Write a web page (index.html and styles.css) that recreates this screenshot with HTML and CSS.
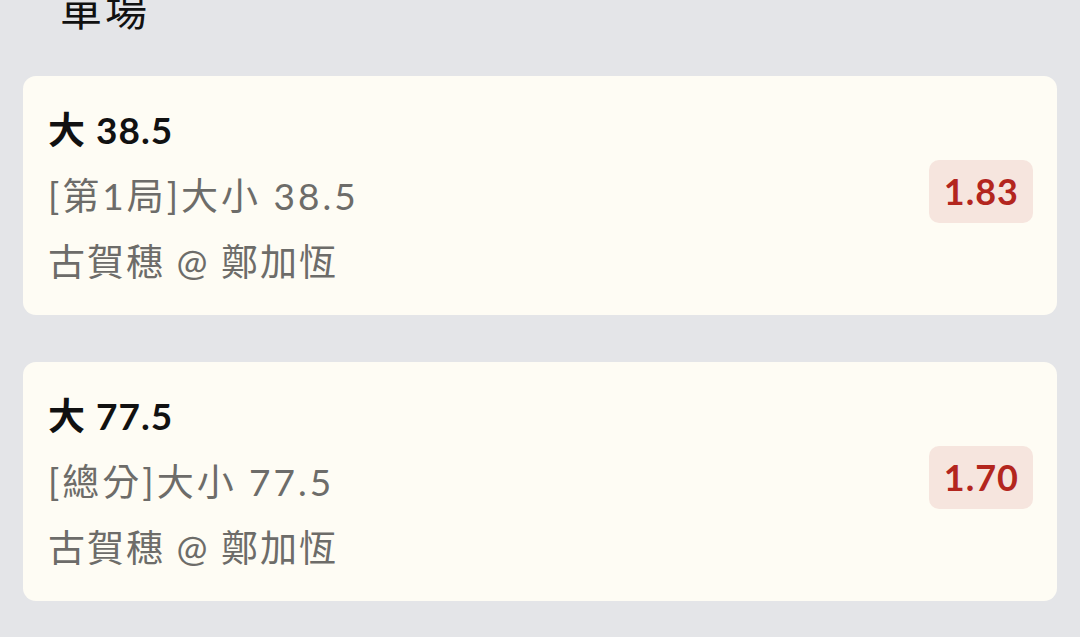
FILE: index.html
```html
<!DOCTYPE html>
<html lang="zh-Hant">
<head>
    <meta charset="UTF-8">
    <meta name="viewport" content="width=device-width, initial-scale=1.0">
    <title>單場</title>
    <link rel="stylesheet" href="styles.css">
</head>
<body>
    <div class="page">
        <h2 class="section-title">單場</h2>
        <div class="bet-list">
            <div class="bet-card">
                <div class="bet-info">
                    <div class="bet-pick">大 38.5</div>
                    <div class="bet-market">[第1局]大小 38.5</div>
                    <div class="bet-match">古賀穗 @ 鄭加恆</div>
                </div>
                <div class="odds">1.83</div>
            </div>
            <div class="bet-card">
                <div class="bet-info">
                    <div class="bet-pick">大 77.5</div>
                    <div class="bet-market">[總分]大小 77.5</div>
                    <div class="bet-match">古賀穗 @ 鄭加恆</div>
                </div>
                <div class="odds">1.70</div>
            </div>
        </div>
    </div>
</body>
</html>
```

FILE: styles.css
```css
body {
    font-family: 'Lato', 'Noto Sans CJK TC', sans-serif;
    background: #e4e5e8;
    color: #111;
    margin: 0;
    padding: 0;
    overflow: hidden;
}
.page {
    padding: 0 23px;
}
.section-title {
    font-size: 42px;
    font-weight: 400;
    line-height: 48px;
    letter-spacing: 3px;
    margin: -14px 0 42px;
    padding-left: 37px;
}
.bet-list {
    display: flex;
    flex-direction: column;
    gap: 47px;
}
.bet-card {
    background: #fefcf4;
    border-radius: 13px;
    padding: 21px 24px 20px 25px;
    display: flex;
    align-items: center;
    justify-content: space-between;
}
.bet-info div {
    font-size: 37px;
    line-height: 66px;
    letter-spacing: 2px;
    white-space: nowrap;
}
.bet-info .bet-pick {
    font-weight: 700;
    letter-spacing: 1px;
    color: #111;
}
.bet-info .bet-market {
    letter-spacing: 3px;
}
.bet-market, .bet-match {
    color: #6d6c69;
}
.odds {
    background: #f6e5de;
    color: #b3261e;
    font-size: 36px;
    font-weight: 700;
    line-height: 43px;
    letter-spacing: 1px;
    padding: 10px 14px 10px 15px;
    border-radius: 10px;
    margin-bottom: 10px;
}
```
